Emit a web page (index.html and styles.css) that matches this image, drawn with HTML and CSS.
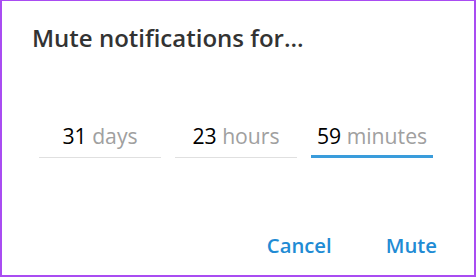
FILE: index.html
```html
<!DOCTYPE html>
<html lang="en">
<head>
<meta charset="utf-8">
<title>Mute notifications</title>
<link rel="stylesheet" href="styles.css">
</head>
<body>
<div class="dialog">
  <h1 class="title">Mute notifications for...</h1>
  <div class="fields">
    <div class="field"><span class="num">31</span> <span class="unit">days</span></div>
    <div class="field"><span class="num">23</span> <span class="unit">hours</span></div>
    <div class="field field-active"><span class="num">59</span> <span class="unit">minutes</span></div>
  </div>
  <div class="actions">
    <button class="btn" type="button">Cancel</button>
    <button class="btn" type="button">Mute</button>
  </div>
</div>
</body>
</html>
```

FILE: styles.css
```css
html, body {
  margin: 0;
  padding: 0;
  background: #ffffff;
}

.dialog {
  box-sizing: border-box;
  width: 476px;
  height: 277px;
  border-style: solid;
  border-color: #a94cf2;
  border-width: 1px 2px 2px 2px;
  padding: 20px 0 16px 0;
  display: flex;
  flex-direction: column;
  font-family: "Open Sans", "Liberation Sans", sans-serif;
}

.title {
  margin: 0;
  padding-left: 30px;
  font-size: 24px;
  line-height: 33px;
  font-weight: 600;
  color: #333333;
}

.fields {
  margin-top: 67px;
  padding-left: 37px;
  display: flex;
  gap: 14px;
}

.field {
  box-sizing: border-box;
  width: 122px;
  font-size: 21.2px;
  line-height: 29px;
  text-align: center;
  padding-bottom: 7px;
  border-bottom: 1px solid #e0e0e0;
}

.field-active {
  padding-bottom: 5px;
  border-bottom: 3px solid #3a9cdb;
}

.num {
  color: #000000;
}

.unit {
  color: #a0a0a0;
}

.actions {
  margin-top: auto;
  display: flex;
  justify-content: flex-end;
  gap: 54px;
  padding-right: 37px;
}

.btn {
  margin: 0;
  padding: 0;
  border: 0;
  background: none;
  font-family: "Open Sans", "Liberation Sans", sans-serif;
  font-size: 20.3px;
  line-height: 27px;
  font-weight: 600;
  color: #218bd4;
  cursor: pointer;
}
```
